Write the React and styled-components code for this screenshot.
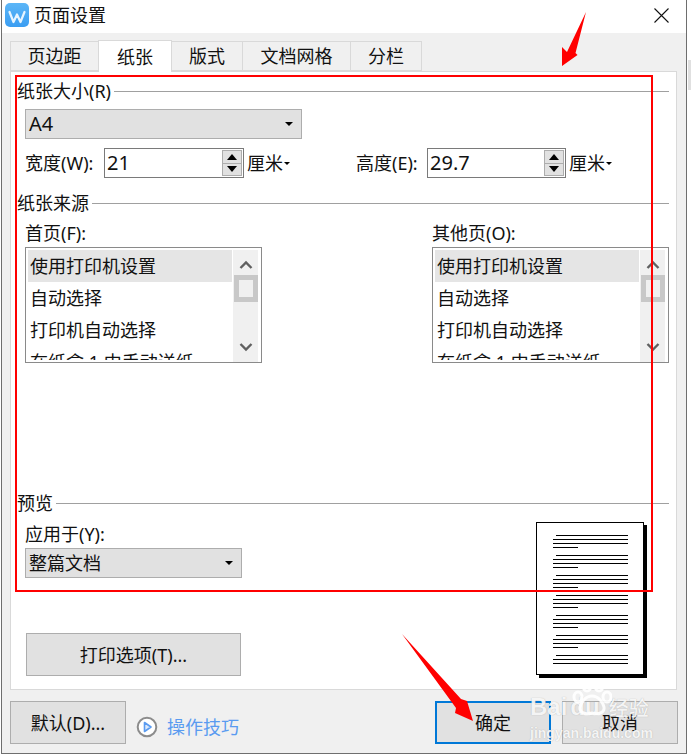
import React from "react";
import styled, { createGlobalStyle } from "styled-components";

const Global = createGlobalStyle`
  html, body { margin: 0; padding: 0; background: #fff; }
  body { font-family: "Noto Sans", "Noto Sans CJK SC", sans-serif; font-size: 18px; color: #111; overflow: hidden; }
  * { box-sizing: border-box; }
`;

const Stage = styled.div`
  position: relative;
  width: 691px;
  height: 755px;
  overflow: hidden;
`;
const BackdropStrip = styled.div`
  position: absolute;
  left: 688px;
  top: 60px;
  width: 3px;
  height: 30px;
  background: #e0e0e0;
`;
const Dialog = styled.div`
  margin-left: 1px;
  width: 686px;
  height: 754px;
  background: #f0f0f0;
  border: 1px solid #6e6e6e;
  border-top: 0;
  display: flex;
  flex-direction: column;
`;
const TitleBar = styled.div`
  height: 33px;
  background: #fff;
  display: flex;
  align-items: center;
  padding: 0 17px 4px 3px;
  flex: none;
`;
const TitleText = styled.span`
  margin-left: 5px;
  line-height: 24px;
  flex: 1;
`;
const Tabs = styled.div`
  display: flex;
  align-items: flex-end;
  height: 38px;
  padding-left: 8px;
  flex: none;
`;
const Tab = styled.div`
  position: relative;
  z-index: ${(p) => (p.$active ? 2 : 0)};
  width: ${(p) => p.$w}px;
  height: ${(p) => (p.$active ? 32 : 30)}px;
  margin-bottom: ${(p) => (p.$active ? -1 : 0)}px;
  margin-left: ${(p) => (p.$first ? 0 : -1)}px;
  background: ${(p) => (p.$active ? "#fff" : "#f0f0f0")};
  border: 1px solid #d9d9d9;
  border-bottom: ${(p) => (p.$active ? "0" : "1px solid #d9d9d9")};
  display: flex;
  align-items: center;
  justify-content: center;
  line-height: 24px;
`;
const Panel = styled.div`
  margin-left: 8px;
  width: 667px;
  height: 619px;
  flex: none;
  background: #fff;
  border: 1px solid #d9d9d9;
  padding: 9px 7px 0 6px;
  display: flex;
  flex-direction: column;
`;
const Heading = styled.div`
  display: flex;
  align-items: center;
  height: 20px;
  line-height: 20px;
  flex: none;
  margin-top: ${(p) => p.$mt || 0}px;
  &::after {
    content: "";
    flex: 1;
    height: 1px;
    background: #a0a0a0;
    margin-left: 3px;
  }
`;
const Indented = styled.div`
  padding-left: 8px;
  flex: none;
`;
const SelectBox = styled.div`
  width: ${(p) => p.$w}px;
  height: 30px;
  margin-top: ${(p) => p.$mt || 0}px;
  background: #e1e1e1;
  border: 1px solid #adadad;
  display: flex;
  align-items: center;
  justify-content: space-between;
  padding: 0 8px 0 3px;
  line-height: 24px;
`;
const Value = styled.span`
  font-size: 20px;
  line-height: 24px;
`;
const Caret = styled.span`
  width: 0;
  height: 0;
  border-left: ${(p) => (p.$small ? 3 : 4)}px solid transparent;
  border-right: ${(p) => (p.$small ? 3 : 4)}px solid transparent;
  border-top: ${(p) => (p.$small ? 3 : 4)}px solid #000;
  flex: none;
  margin-left: ${(p) => p.$ml || 0}px;
`;
const DimRow = styled.div`
  display: flex;
  margin-top: 9px;
  height: 30px;
`;
const DimGroup = styled.div`
  display: flex;
  align-items: center;
  width: ${(p) => p.$w}px;
  flex: none;
`;
const DimLabel = styled.span`
  width: ${(p) => p.$w}px;
  flex: none;
  line-height: 24px;
`;
const SpinInput = styled.div`
  width: ${(p) => p.$w}px;
  height: 30px;
  background: #fff;
  border: 1px solid #7a7a7a;
  display: flex;
  align-items: center;
  justify-content: space-between;
  padding: 0 1px 0 2px;
`;
const SpinStack = styled.div`
  width: 20px;
  height: 26px;
  display: flex;
  flex-direction: column;
  gap: 1px;
  border: 1px solid #adadad;
  background: #adadad;
`;
const SpinBtn = styled.div`
  flex: 1;
  background: #e1e1e1;
  display: flex;
  align-items: center;
  justify-content: center;
`;
const Tri = styled.span`
  width: 0;
  height: 0;
  border-left: 5px solid transparent;
  border-right: 5px solid transparent;
  ${(p) => (p.$up ? "border-bottom: 6px solid #000;" : "border-top: 6px solid #000;")}
`;
const Unit = styled.span`
  margin-left: 3px;
  line-height: 24px;
  display: flex;
  align-items: center;
`;
const Sources = styled.div`
  margin-top: 10px;
  display: flex;
  justify-content: space-between;
`;
const SourceCol = styled.div`
  width: 237px;
`;
const FieldLabel = styled.div`
  height: 20px;
  line-height: 20px;
  margin-bottom: 4px;
`;
const ListBox = styled.div`
  height: 116px;
  background: #fff;
  border: 1px solid #8a8a8a;
  padding: 2px;
  display: flex;
  justify-content: space-between;
  overflow: hidden;
`;
const Items = styled.div`
  width: 204px;
  overflow: hidden;
`;
const Item = styled.div`
  height: 32px;
  line-height: 32px;
  padding-left: 2px;
  white-space: nowrap;
  background: ${(p) => (p.$sel ? "#e5e5e5" : "transparent")};
`;
const ScrollBar = styled.div`
  width: 25px;
  height: 112px;
  background: #f0f0f0;
  display: flex;
  flex-direction: column;
  align-items: center;
  margin-right: 1px;
`;
const Chevron = styled.svg`
  width: 14px;
  height: 10px;
  flex: none;
  margin-top: ${(p) => p.$mt}px;
`;
const Thumb = styled.div`
  width: 24px;
  height: 27px;
  flex: none;
  margin-top: 5px;
  border: 5px solid #c8c8c8;
  background: #f0f0f0;
`;
const PreviewRow = styled.div`
  display: flex;
  justify-content: space-between;
  align-items: flex-start;
  padding-right: 22px;
  margin-top: 9px;
`;
const PreviewLeft = styled.div`
  width: 217px;
  padding-top: 2px;
`;
const PageThumb = styled.svg`
  display: block;
  width: 111px;
  height: 156px;
  flex: none;
`;
const PrintButton = styled.div`
  width: 215px;
  height: 43px;
  margin: 55px 0 0 1px;
  background: #e1e1e1;
  border: 1px solid #adadad;
  display: flex;
  align-items: center;
  justify-content: center;
  line-height: 24px;
`;
const Footer = styled.div`
  display: flex;
  align-items: center;
  margin-top: 11px;
  padding: 0 8px;
  height: 43px;
  flex: none;
`;
const FootButton = styled.div`
  width: 116px;
  height: 43px;
  flex: none;
  margin-left: ${(p) => p.$ml || "0"};
  background: #e1e1e1;
  border: ${(p) => (p.$focus ? "2px solid #0078d7" : "1px solid #adadad")};
  display: flex;
  align-items: center;
  justify-content: center;
  line-height: 24px;
`;
const TipIcon = styled.svg`
  width: 22px;
  height: 22px;
  flex: none;
  margin: 8px 0 0 10px;
`;
const TipText = styled.span`
  margin: 8px 0 0 9px;
  color: #5a9bf0;
  line-height: 24px;
`;
const RedFrame = styled.div`
  position: absolute;
  left: 15px;
  top: 75px;
  width: 638px;
  height: 517px;
  border: 2px solid #f00;
  pointer-events: none;
`;
const Overlay = styled.svg`
  position: absolute;
  left: 0;
  top: 0;
  width: 691px;
  height: 755px;
  pointer-events: none;
`;
const Watermark = styled.div`
  position: absolute;
  left: 530px;
  top: 692px;
  width: 130px;
  height: 50px;
  color: rgba(255, 255, 255, 0.88);
  text-shadow: 0 0 1px rgba(120, 120, 120, 0.55);
  pointer-events: none;
`;
const WmTop = styled.div`
  display: flex;
  align-items: center;
  height: 30px;
  font-family: "Liberation Sans", sans-serif;
  font-weight: 700;
  font-size: 24px;
`;
const WmPaw = styled.svg`
  position: absolute;
  left: 42px;
  top: -12px;
  width: 40px;
  height: 38px;
`;
const WmDu = styled.span`
  margin-left: 3px;
`;
const WmCn = styled.span`
  margin-left: 9px;
  font-family: "Noto Sans CJK SC", sans-serif;
  font-size: 20px;
  font-weight: 500;
`;
const WmUrl = styled.div`
  font-family: "Liberation Sans", sans-serif;
  font-size: 14px;
  font-weight: 700;
  line-height: 16px;
  margin-top: 3px;
  white-space: nowrap;
`;

const TABS = [
  ["页边距", 89],
  ["纸张", 74],
  ["版式", 72],
  ["文档网格", 109],
  ["分栏", 72],
];
const ITEMS = ["使用打印机设置", "自动选择", "打印机自动选择", "在纸盒 1 中手动送纸"];

const Logo = () => (
  <svg width="24" height="24" viewBox="0 0 24 24" style={{ flex: "none" }}>
    <defs>
      <linearGradient id="wps" x1="0" y1="0" x2="0" y2="1">
        <stop offset="0" stopColor="#5cb6f7" />
        <stop offset="1" stopColor="#3a9df2" />
      </linearGradient>
    </defs>
    <rect width="24" height="24" rx="5" fill="url(#wps)" />
    <path d="M4.5 9 L8.5 19 L12 11.5 L15.5 19 L19.5 9" fill="none" stroke="#e6f4ff" strokeWidth="2.2" strokeLinejoin="round" strokeLinecap="round" />
  </svg>
);

const CloseIcon = () => (
  <svg width="15" height="15" viewBox="0 0 15 15" style={{ flex: "none", marginTop: 2 }}>
    <path d="M0.5 0.5 L14.5 14.5 M14.5 0.5 L0.5 14.5" stroke="#111" strokeWidth="1.1" />
  </svg>
);

const Spin = () => (
  <SpinStack>
    <SpinBtn><Tri $up /></SpinBtn>
    <SpinBtn><Tri /></SpinBtn>
  </SpinStack>
);

const ListControl = () => (
  <ListBox>
    <Items>
      {ITEMS.map((t, i) => (
        <Item key={t} $sel={i === 0}>{t}</Item>
      ))}
    </Items>
    <ScrollBar>
      <Chevron $mt={10} viewBox="0 0 14 10">
        <path d="M1.5 8 L7 2.5 L12.5 8" fill="none" stroke="#606060" strokeWidth="2.4" />
      </Chevron>
      <Thumb />
      <Chevron $mt={40} viewBox="0 0 14 10">
        <path d="M1.5 2 L7 7.5 L12.5 2" fill="none" stroke="#606060" strokeWidth="2.4" />
      </Chevron>
    </ScrollBar>
  </ListBox>
);

const pageLines = [];
for (let g = 0; g < 7; g++) {
  const y = 13.5 + g * 20;
  pageLines.push(`M20 ${y}H92`, `M17 ${y + 4}H92`, `M17 ${y + 8}H92`);
  if (g < 6) pageLines.push(`M17 ${y + 12}H42`);
}

const PagePreview = () => (
  <PageThumb viewBox="0 0 111 156">
    <rect x="3" y="3" width="108" height="153" fill="#000" />
    <rect x="0.5" y="0.5" width="107" height="152" fill="#fff" stroke="#000" />
    <path d={pageLines.join(" ")} stroke="#000" strokeWidth="1" fill="none" />
  </PageThumb>
);

export default function App() {
  return (
    <Stage>
      <Global />
      <BackdropStrip />
      <Dialog>
        <TitleBar>
          <Logo />
          <TitleText>页面设置</TitleText>
          <CloseIcon />
        </TitleBar>
        <Tabs>
          {TABS.map(([t, w], i) => (
            <Tab key={t} $w={w} $first={i === 0} $active={i === 1}>{t}</Tab>
          ))}
        </Tabs>
        <Panel>
          <Heading>纸张大小(R)</Heading>
          <Indented>
            <SelectBox $w={277} $mt={8}>
              <Value>A4</Value>
              <Caret />
            </SelectBox>
            <DimRow>
              <DimGroup $w={331}>
                <DimLabel $w={79}>宽度(W):</DimLabel>
                <SpinInput $w={140}><Value>21</Value><Spin /></SpinInput>
                <Unit>厘米<Caret $small $ml={1} /></Unit>
              </DimGroup>
              <DimGroup $w={300}>
                <DimLabel $w={71}>高度(E):</DimLabel>
                <SpinInput $w={139}><Value>29.7</Value><Spin /></SpinInput>
                <Unit>厘米<Caret $small $ml={1} /></Unit>
              </DimGroup>
            </DimRow>
          </Indented>
          <Heading $mt={15}>纸张来源</Heading>
          <Indented>
            <Sources>
              <SourceCol>
                <FieldLabel>首页(F):</FieldLabel>
                <ListControl />
              </SourceCol>
              <SourceCol>
                <FieldLabel>其他页(O):</FieldLabel>
                <ListControl />
              </SourceCol>
            </Sources>
          </Indented>
          <Heading $mt={130}>预览</Heading>
          <Indented>
            <PreviewRow>
              <PreviewLeft>
                <FieldLabel>应用于(Y):</FieldLabel>
                <SelectBox $w={217}>
                  整篇文档
                  <Caret />
                </SelectBox>
                <PrintButton>打印选项(T)...</PrintButton>
              </PreviewLeft>
              <PagePreview />
            </PreviewRow>
          </Indented>
        </Panel>
        <Footer>
          <FootButton>默认(D)...</FootButton>
          <TipIcon viewBox="0 0 22 22">
            <circle cx="11" cy="11" r="9.3" fill="#fff" stroke="#8c8c8c" strokeWidth="2" />
            <path d="M8.5 6.5 L15 11 L8.5 15.5 Z" fill="#dbe9fb" stroke="#5a9bf0" strokeWidth="1.6" strokeLinejoin="round" />
          </TipIcon>
          <TipText>操作技巧</TipText>
          <FootButton $ml="auto" $focus>确定</FootButton>
          <FootButton $ml="11px">取消</FootButton>
        </Footer>
      </Dialog>
      <RedFrame />
      <Watermark>
        <WmPaw viewBox="0 0 40 38">
          <g fill="none" stroke="rgba(255,255,255,0.9)" strokeWidth="3">
            <ellipse cx="6" cy="17" rx="4" ry="5" />
            <ellipse cx="15" cy="6" rx="4" ry="5" />
            <ellipse cx="27" cy="6" rx="4" ry="5" />
            <ellipse cx="35" cy="17" rx="4" ry="5" />
            <path d="M20 16 C13 16 9 23 8 27 C7 33 14 35 20 33 C26 35 33 33 32 27 C31 23 27 16 20 16 Z" />
          </g>
        </WmPaw>
        <WmTop>
          Bai
          <WmDu>du</WmDu>
          <WmCn>经验</WmCn>
        </WmTop>
        <WmUrl>jingyan.baidu.com</WmUrl>
      </Watermark>
      <Overlay viewBox="0 0 691 755">
        <polygon points="586,12 575.5,53 577.5,55 562,66 562,47 567,52" fill="#f00" />
        <polygon points="402,634 461,699 467,701 473,721 455,713 456,708" fill="#f00" />
      </Overlay>
    </Stage>
  );
}
